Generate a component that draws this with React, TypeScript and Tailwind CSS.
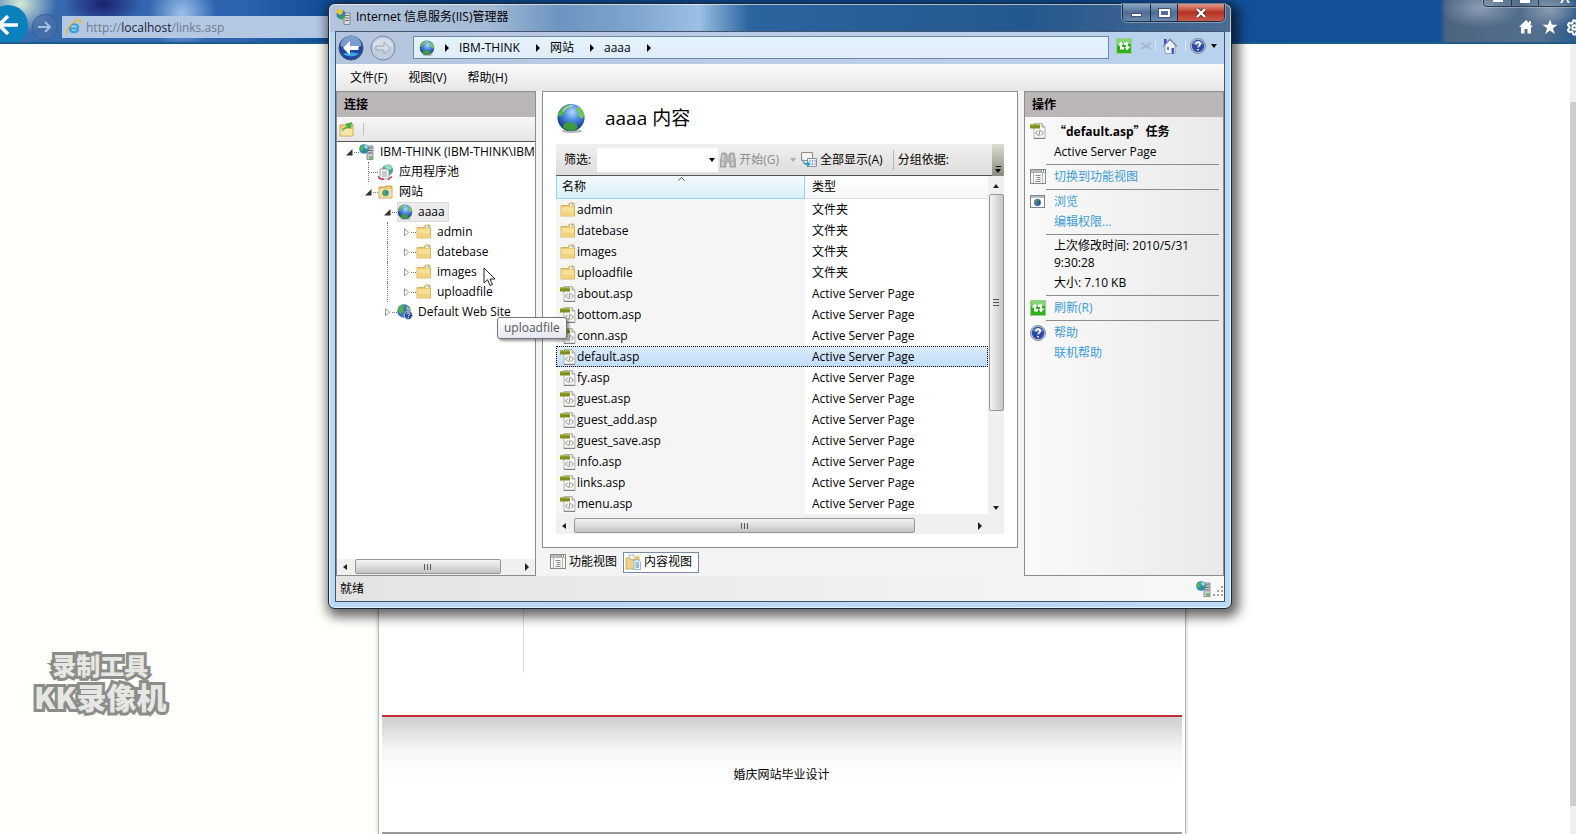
import React from 'react';
import { Settings } from 'lucide-react';

type IconProps = { size?: number };
type IconType = React.FC<IconProps>;

const GlobeIcon: IconType = ({ size = 16 }) => (
  <svg width={size} height={size} viewBox="0 0 32 32" className="shrink-0">
    <defs>
      <radialGradient id="sea" cx="55%" cy="30%" r="70%">
        <stop offset="0" stopColor="#b4d8fc" />
        <stop offset="0.45" stopColor="#4a8ae0" />
        <stop offset="1" stopColor="#142c80" />
      </radialGradient>
    </defs>
    <ellipse cx="17" cy="30" rx="11" ry="2" fill="#b9bcc4" />
    <circle cx="16" cy="15.500" r="14.500" fill="url(#sea)" />
    <path d="M4 9C7 4 11 1.500 15 1.200L14 5l-4 2-1 4-4 3-3 0c0-2 .5-3.500 2-5z" fill="#58b048" />
    <path d="M24 4c3 2 5 5 6 9l-2 4-4-3 0-4-3-3z" fill="#78c858" />
    <path d="M9 22l6-2 7 3 1 4-4 2.500c-5 1-9-1-12-4z" fill="#3c9c3c" />
    <path d="M7 9c3-4 7-6 11-6" stroke="#d8f0d0" strokeWidth="1.500" fill="none" opacity="0.7" />
  </svg>
);

const FolderIcon: IconType = () => (
  <svg width="16" height="16" viewBox="0 0 16 16" className="shrink-0">
    <path d="M1 3.500h7l1.500-2.500H14v2.500h.500V14H1z" fill="#e6c468" stroke="#cfa44c" strokeWidth="0.8" />
    <path d="M10 1.800h3.500V4H10z" fill="#fff" />
    <circle cx="12.500" cy="2.600" r="0.900" fill="#5aa6e8" />
    <path d="M1.500 4.800h12.600v8.700H1.500z" fill="#f8e096" />
    <path d="M1.500 9.500h12.600v4H1.500z" fill="#f2d47e" />
  </svg>
);

const AspIcon: IconType = () => (
  <svg width="16" height="16" viewBox="0 0 16 16" className="shrink-0">
    <path d="M4 .5h8L15 4v11.500H4z" fill="#f7f7f5" stroke="#a4a4a4" strokeWidth="0.8" />
    <path d="M12 .5V4h3" fill="#ddd" stroke="#8f8f8f" strokeWidth="0.8" />
    <path d="M4 15.300h11" stroke="#777" />
    <path d="M0 1.500h10v4H0z" fill="#7f8f1c" />
    <path d="M0 1.500h10v1H0z" fill="#a3b23c" />
    <path d="M8 7.500L5.500 10 8 12.500M11 7.500l2.500 2.500-2.500 2.500M10.200 6.800L8.800 13" stroke="#8a8a8a" strokeWidth="1" fill="none" />
  </svg>
);

const ServerIcon: IconType = () => (
  <svg width="16" height="16" viewBox="0 0 16 16" className="shrink-0">
    <path d="M8 2h6v13.500H8z" fill="#c9cccf" stroke="#777c80" strokeWidth="0.8" />
    <path d="M9 4h4M9 6.500h4M9 9h4" stroke="#5d6266" />
    <path d="M10 12.500h4v2h-4z" fill="#58b84c" />
    <circle cx="5" cy="5" r="4.800" fill="#2e88c8" />
    <path d="M1 4c1-2 3-3.500 5-3L5 4 3 7c-1 0-2-1-2-3z" fill="#58b848" />
    <path d="M5 2l2-1 2 2-1 2-2-1z" fill="#a8dcf4" />
    <path d="M6 6l3-1c0 2-1 3.500-3 4z" fill="#3c9c3c" />
  </svg>
);

const TitleIcon: IconType = () => (
  <svg width="16" height="16" viewBox="0 0 16 16" className="shrink-0">
    <path d="M8 4h6v11.500H8z" fill="#dcdfe0" stroke="#6f7478" strokeWidth="0.8" />
    <path d="M9 6.500h4M9 9h4M9 11.500h4" stroke="#6d7276" />
    <circle cx="5" cy="5.500" r="4.500" fill="#3a78c0" />
    <path d="M0 2c2-2 5-2 7 0l-1 3-3 1z" fill="#f0c820" />
    <path d="M3 8l4-3 2 2-3 4z" fill="#38a048" />
  </svg>
);

const AppPoolIcon: IconType = () => (
  <svg width="16" height="16" viewBox="0 0 16 16" className="shrink-0">
    <circle cx="9.500" cy="6" r="5.500" fill="#3ba890" />
    <path d="M6 2c3-2 7-1 8 2l-2 2-4-1z" fill="#9adcc8" />
    <path d="M2 5h7l2 2v8H2z" fill="#f4f4f4" stroke="#8a8a8a" strokeWidth="0.8" />
    <path d="M4 8h5M4 10h5M4 12h5" stroke="#8a8a8a" strokeWidth="0.8" />
    <path d="M0 12c1 3 4 3.500 6 3.200" stroke="#c8384c" strokeWidth="1.400" fill="none" />
    <path d="M10 15.500l4-3" stroke="#c8384c" strokeWidth="1.400" />
  </svg>
);

const SitesIcon: IconType = () => (
  <svg width="16" height="16" viewBox="0 0 16 16" className="shrink-0">
    <path d="M1 3h6l1-1h6v12H1z" fill="#ecca74" stroke="#b8903c" strokeWidth="0.8" />
    <path d="M1.500 5h12v8.500h-12z" fill="#f7e2a4" />
    <circle cx="7.500" cy="9" r="3.200" fill="#2e8ac0" />
    <path d="M4.800 8c1-2 3-2 4-1.500L7.500 9l1 2.500c-2 1-4-1-3.700-3.500z" fill="#4fb040" />
  </svg>
);

const QuestionGlobeIcon: IconType = () => (
  <svg width="16" height="16" viewBox="0 0 16 16" className="shrink-0">
    <circle cx="7" cy="7" r="6.800" fill="#3c72c8" />
    <path d="M1 5c1-3 4-5 7-4.500L6 4l1 3-3 3C2 9 1 7 1 5z" fill="#52b044" />
    <path d="M10 2l3 3-1 2-3-2z" fill="#8ccc70" />
    <circle cx="11.300" cy="11.300" r="4.200" fill="#2b4b94" stroke="#dfe8f4" strokeWidth="0.800" />
    <path d="M9.800 10.300c0-2 3-2 3-.3 0 1-1.500 1-1.500 2.200M11.300 13v1" stroke="#fff" strokeWidth="1" fill="none" />
  </svg>
);

const RefreshIcon: IconType = () => (
  <svg width="16" height="16" viewBox="0 0 16 16" className="shrink-0">
    <rect x="0.500" y="0.500" width="15" height="15" fill="#2cb01c" stroke="#9ccf94" />
    <path d="M1 1h14v5H1z" fill="#84d474" />
    <path d="M1.500 7.500L5 3.500 7.500 7H6v2h2v2.500H4V7.500z" fill="#fff" />
    <path d="M14.500 8.500L11 12.500 8.500 9H10V7H8V4.500h4v4z" fill="#fff" />
  </svg>
);

const HelpIcon: IconType = () => (
  <svg width="16" height="16" viewBox="0 0 16 16" className="shrink-0">
    <circle cx="8" cy="8" r="7.500" fill="#c8ccd8" stroke="#6a7084" strokeWidth="0.800" />
    <circle cx="8" cy="8" r="6.200" fill="#2c48a8" />
    <path d="M2.500 6c1-4 10-4 11 0-3 1.500-8 1.500-11 0z" fill="#6484cc" />
    <path d="M6 6.300c0-3 4.200-2.800 4.200-.2C10.200 7.800 8 7.800 8 9.500M8 11v1.600" stroke="#fff" strokeWidth="1.600" fill="none" />
  </svg>
);

const FeatureViewIcon: IconType = () => (
  <svg width="16" height="16" viewBox="0 0 16 16" className="shrink-0">
    <rect x="0.500" y="0.500" width="15" height="14" fill="#f8f8f8" stroke="#8a8a8a" />
    <path d="M1 2h10" stroke="#b8b8b8" strokeWidth="2" />
    <path d="M11 2h4" stroke="#888" strokeWidth="2" strokeDasharray="1 1" />
    <path d="M1 3.500h14M3.500 4v10M12.500 4v10" stroke="#b4b4b4" />
    <path d="M5.500 6.500h5M6.500 8.500h4M6.500 10.500h4M5.500 12.500h5" stroke="#888" />
  </svg>
);

const ContentViewIcon: IconType = () => (
  <svg width="16" height="16" viewBox="0 0 16 16" className="shrink-0">
    <path d="M4 1h5v5H4z" fill="#fff" stroke="#a0a0a0" strokeWidth="0.800" />
    <path d="M10 3l3-2 2 3v4h-5z" fill="#e8c474" />
    <path d="M1 4h4l1 2h6v9H1z" fill="#f0d48c" stroke="#c0a058" strokeWidth="0.800" />
    <path d="M9 6h5l1.500 2v7.500H9z" fill="#f4f9ff" stroke="#7aa8d8" strokeWidth="0.800" />
    <path d="M10.500 9h3.500M10.500 11h3.500M10.500 13h3.500" stroke="#3c7cc8" />
  </svg>
);

const BrowseIcon: IconType = () => (
  <svg width="16" height="16" viewBox="0 0 16 16" className="shrink-0">
    <rect x="0.500" y="1.500" width="14" height="12" fill="#fff" stroke="#7c8494" />
    <path d="M1 3h13" stroke="#b4bccc" strokeWidth="2" />
    <circle cx="7.500" cy="8.500" r="3.400" fill="#2c58b0" />
    <path d="M5 7c1-2 3-2 4-1L7 8l1 3c-2 0-3-2-3-4z" fill="#48a048" />
  </svg>
);

const BinocularsIcon: IconType = () => (
  <svg width="16" height="16" viewBox="0 0 16 16" className="shrink-0">
    <path d="M2 1h4l1 3h2l1-3h4l1.500 8v6H10v-5H6v5H.5V9z" fill="#b4b4b4" stroke="#949494" strokeWidth="0.800" />
    <path d="M3 3v5M12 3v5M2.500 10v4M12.500 10v4" stroke="#dcdcdc" strokeWidth="1.200" />
  </svg>
);

const ShowAllIcon: IconType = () => (
  <svg width="16" height="16" viewBox="0 0 16 16" className="shrink-0">
    <path d="M.5.500h11v8H.5z" fill="#f4f4f4" stroke="#8c8c8c" />
    <path d="M6.500 6.500h9v8h-9z" fill="#f0f2fa" stroke="#8890a4" />
    <path d="M8.500 9h1M11 9h1M13.500 9h1M8.500 12h1M11 12h1M13.500 12h1" stroke="#5868c0" strokeWidth="1.500" />
    <path d="M2 6c0 4 1 5 4 5V8.500L9.500 12 6 15.500V13C3 13 1 11 2 6z" fill="#28a0c8" />
  </svg>
);

const HomeIcon: IconType = () => (
  <svg width="16" height="16" viewBox="0 0 16 16" className="shrink-0">
    <path d="M2 1h2.500v5H2z" fill="#3c48b8" />
    <path d="M3 7l5-5 5 5v8.500H3z" fill="#eef1f8" stroke="#8088a0" strokeWidth="0.700" />
    <path d="M1 8.500L8 1.200l7 7.300" stroke="#7c88ac" strokeWidth="1.400" fill="none" />
    <path d="M9.500 10h2.500v5.500H9.500z" fill="#4858b0" />
    <path d="M5 9h2v3H5z" fill="#6c80c8" />
  </svg>
);

const IeIcon: IconType = () => (
  <svg width="16" height="16" viewBox="0 0 16 16" className="shrink-0">
    <path d="M3.500 9.500h9M12.300 10.500c-2 4-8.600 3.500-8.600-1.500S12 4 12.300 9" stroke="#38a0dc" strokeWidth="2.200" fill="none" />
    <path d="M2 14.500C-1 12 5 2 12.500 1 16 .7 15 4 14 5.500" stroke="#f0bc30" strokeWidth="1.500" fill="none" />
  </svg>
);

const Arrow: React.FC<{ dir: 'up' | 'down' | 'left' | 'right'; color?: string }> = ({ dir, color = '#222' }) => {
  const points = { up: '1,6 4,2 7,6', down: '1,2 4,6 7,2', left: '6,1 2,4 6,7', right: '2,0 6,4 2,8' }[dir];
  return (
    <svg width="8" height="8" viewBox="0 0 8 8" className="shrink-0">
      <polygon points={points} fill={color} />
    </svg>
  );
};

type TreeNode = {
  label: string;
  level: number;
  icon: IconType;
  state?: 'open' | 'closed';
  guides?: number[];
  selected?: boolean;
};

const tree: TreeNode[] = [
  { label: 'IBM-THINK (IBM-THINK\\IBM)', level: 0, icon: ServerIcon, state: 'open' },
  { label: '应用程序池', level: 1, icon: AppPoolIcon, guides: [1] },
  { label: '网站', level: 1, icon: SitesIcon, state: 'open' },
  { label: 'aaaa', level: 2, icon: GlobeIcon, state: 'open', selected: true },
  { label: 'admin', level: 3, icon: FolderIcon, state: 'closed', guides: [2] },
  { label: 'datebase', level: 3, icon: FolderIcon, state: 'closed', guides: [2] },
  { label: 'images', level: 3, icon: FolderIcon, state: 'closed', guides: [2] },
  { label: 'uploadfile', level: 3, icon: FolderIcon, state: 'closed', guides: [2] },
  { label: 'Default Web Site', level: 2, icon: QuestionGlobeIcon, state: 'closed' },
];

const folders = ['admin', 'datebase', 'images', 'uploadfile'];
const pages = ['about', 'bottom', 'conn', 'default', 'fy', 'guest', 'guest_add', 'guest_save', 'info', 'links', 'menu'];

const files = [
  ...folders.map((name) => ({ name, type: '文件夹', icon: FolderIcon })),
  ...pages.map((page) => ({ name: `${page}.asp`, type: 'Active Server Page', icon: AspIcon })),
];

const TreeRow: React.FC<{ node: TreeNode }> = ({ node }) => {
  const Icon = node.icon;
  const cells = Array.from({ length: node.level + 1 }, (_, i) => i);
  return (
    <li className="flex h-5 items-center whitespace-nowrap">
      {cells.map((i) => (
        <span key={i} className="flex h-5 w-[19px] shrink-0 items-center">
          {node.guides?.includes(i) ? (
            <span className="ml-[9px] h-5 border-l border-dotted border-[#777]" />
          ) : (
            <span className="w-[5px]" />
          )}
          {i === node.level && node.state && (
            <svg width="9" height="9" viewBox="0 0 9 9" className="shrink-0">
              {node.state === 'open' ? (
                <path d="M7.500 1v6.500H1z" fill="#333" />
              ) : (
                <path d="M2.500.8v7L6.800 4.300z" fill="#fff" stroke="#999" />
              )}
            </svg>
          )}
          {i === node.level && <span className="flex-1 border-t border-dotted border-[#777]" />}
        </span>
      ))}
      <button
        className={`flex h-5 items-center gap-[5px] pr-1 ${node.selected ? 'bg-[#ebebee] outline -outline-offset-1 outline-[#dcdce0]' : ''}`}
      >
        <Icon />
        {node.label}
      </button>
    </li>
  );
};

const HScroll: React.FC<{ thumb: string }> = ({ thumb }) => (
  <div className="flex h-4 items-center justify-between bg-[#f0f0f0] px-1">
    <Arrow dir="left" />
    <div className="flex h-4 min-w-0 flex-1 px-[6px]">
      <div
        className={`flex h-[15px] items-center justify-center gap-[2px] rounded-[2px] border border-[#979797] bg-linear-to-b from-[#f4f4f4] via-[#dcdcdc] to-[#c4c4c4] ${thumb}`}
      >
        <span className="h-[6px] w-px bg-[#555]" />
        <span className="h-[6px] w-px bg-[#555]" />
        <span className="h-[6px] w-px bg-[#555]" />
      </div>
    </div>
    <Arrow dir="right" />
  </div>
);

const BrowserBar: React.FC = () => (
  <header className="relative flex h-11 items-center overflow-hidden border-b-2 border-[#1c5c88] bg-[#11509a] bg-[radial-gradient(ellipse_36px_30px_at_20px_4px,#d8ecd8,transparent),radial-gradient(ellipse_40px_24px_at_103px_4px,#1b2070,transparent),radial-gradient(ellipse_34px_36px_at_182px_14px,#9cc0ec,transparent),radial-gradient(ellipse_40px_20px_at_1480px_8px,#8c9cb4,transparent),radial-gradient(ellipse_30px_18px_at_1550px_10px,#8c9cb0,transparent),linear-gradient(90deg,#3a6cae_0,#2e64b0_240px,#0f4c94_330px,#12509a_1440px,#4c6480_1446px,#54708e_1540px,#2c5a8c)]">
    <button aria-label="Back" className="-ml-3 mt-2 flex size-[40px] shrink-0 items-center justify-center rounded-full bg-[#0a80bc]">
      <svg width="24" height="24" viewBox="0 0 24 24">
        <path d="M22 12H4M12 3l-9 9 9 9" stroke="#fff" strokeWidth="3.500" fill="none" />
      </svg>
    </button>
    <button aria-label="Forward" className="ml-1 mt-3 flex size-[26px] shrink-0 items-center justify-center rounded-full border border-[#3a5c90] bg-[#4a70a8]/60">
      <svg width="16" height="16" viewBox="0 0 16 16">
        <path d="M1 8h12M8 3l5 5-5 5" stroke="#a8c0e0" strokeWidth="2" fill="none" />
      </svg>
    </button>
    <div className="mt-3 ml-1 flex h-[22px] w-[700px] items-center gap-1 bg-[#b4c8e4] pl-1">
      <IeIcon />
      <a href="http://localhost/links.asp" className="pt-px text-[#6c7c90]">
        http://<span className="text-[#182434]">localhost</span>/links.asp
      </a>
    </div>
    <div className="mt-3 ml-auto flex shrink-0 items-center gap-2">
      <button aria-label="Home">
        <svg width="16" height="16" viewBox="0 0 16 16">
          <path d="M8 1l7 7h-2v6.500H9.500V10h-3v4.500H3V8H1z" fill="#fff" />
          <path d="M11 2h2v3h-2z" fill="#fff" />
        </svg>
      </button>
      <button aria-label="Favorites">
        <svg width="16" height="16" viewBox="0 0 16 16">
          <path d="M8 .5l2 5.300h5.500L11 9.200l1.700 5.800L8 11.600 3.300 15 5 9.200.500 5.800H6z" fill="#fff" />
        </svg>
      </button>
      <button aria-label="Tools" className="-mr-[7px]">
        <Settings size={17} color="#fff" strokeWidth={3} />
      </button>
    </div>
    <div className="absolute top-0 -right-4 flex h-[7px] overflow-hidden rounded-b-[4px] border border-t-0 border-[#2c3c50] outline outline-[#b0bcc8]/60">
      <span className="flex w-7 justify-center border-r border-[#2c3c50]"><span className="h-[2px] w-[10px] bg-white" /></span>
      <span className="flex w-[27px] justify-center border-r border-[#2c3c50]"><span className="h-[3px] w-[10px] bg-white" /></span>
      <span className="flex w-[52px] justify-center">
        <svg width="10" height="3" viewBox="0 0 10 3">
          <path d="M3 0L1 3M7 0l2 3" stroke="#fff" strokeWidth="2" />
        </svg>
      </span>
    </div>
  </header>
);

const TitleBar: React.FC = () => (
  <div className="flex h-[27px] items-start justify-between">
    <div className="flex h-[26px] items-center gap-1 pl-px">
      <TitleIcon />
      <h1>Internet 信息服务(IIS)管理器</h1>
    </div>
    <div className="flex h-[18px] overflow-hidden rounded-b-[5px] border border-t-0 border-[#1c2c44] outline outline-[#a8bcd4]/60">
      <button aria-label="Minimize" className="flex w-7 items-center justify-center border-r border-[#1c2c44] bg-linear-to-b from-[#90a8c4] via-[#4e6c94] to-[#6c88ac]">
        <span className="mt-1 h-1 w-[11px] border border-[#44546c] bg-white" />
      </button>
      <button aria-label="Maximize" className="flex w-[27px] items-center justify-center border-r border-[#1c2c44] bg-linear-to-b from-[#90a8c4] via-[#4e6c94] to-[#6c88ac]">
        <span className="h-2 w-[11px] border-2 border-white outline outline-[#44546c]" />
      </button>
      <button aria-label="Close" className="flex w-[46px] items-center justify-center bg-linear-to-b from-[#e0988c] via-[#b83020] to-[#c85c48]">
        <svg width="12" height="10" viewBox="0 0 12 10">
          <path d="M2 1l8 8M10 1L2 9" stroke="#58302c" strokeWidth="4" />
          <path d="M2 1l8 8M10 1L2 9" stroke="#fff" strokeWidth="2.400" />
        </svg>
      </button>
    </div>
  </div>
);

const NavBar: React.FC = () => (
  <div className="flex h-8 items-center bg-linear-to-r from-[#b4c4dc] via-[#bccdea] to-[#b8d2ee] pr-[6px] pl-[2px]">
    <button aria-label="Back" className="shrink-0">
      <svg width="26" height="26" viewBox="0 0 26 26">
        <circle cx="13" cy="13" r="12" fill="#1c48a0" stroke="#3c5478" />
        <path d="M2.500 11a10.500 10.500 0 0 1 21 0c-6 3-15 3-21 0z" fill="#7c9cd0" />
        <path d="M5 19a10 6 0 0 0 16 0c-4-2-12-2-16 0z" fill="#38a4e4" />
        <path d="M12 6v5h8.500v4H12v5l-7-7z" fill="#fff" />
      </svg>
    </button>
    <button aria-label="Forward" className="ml-[6px] shrink-0">
      <svg width="26" height="26" viewBox="0 0 26 26">
        <circle cx="13" cy="13" r="12" fill="#c2cee0" stroke="#77869c" />
        <path d="M3 11a10.500 10.500 0 0 1 20 0c-6 3-14 3-20 0z" fill="#d6dee8" />
        <path d="M20.500 13L14 7v4H6v4h8v4z" fill="#d4dce6" stroke="#9ca8b8" />
      </svg>
    </button>
    <nav className="mb-px ml-[17px] flex h-[23px] flex-1 items-center border border-[#7488a4] bg-linear-to-b from-[#e4f4fc] to-[#e0ecfa] pl-[5px]">
      <GlobeIcon />
      <span className="ml-2"><Arrow dir="right" color="#000" /></span>
      <a href="#server" className="ml-2">IBM-THINK</a>
      <span className="ml-[14px]"><Arrow dir="right" color="#000" /></span>
      <a href="#sites" className="ml-2">网站</a>
      <span className="ml-[14px]"><Arrow dir="right" color="#000" /></span>
      <a href="#aaaa" className="ml-2">aaaa</a>
      <span className="ml-[14px]"><Arrow dir="right" color="#000" /></span>
    </nav>
    <div className="mb-1 ml-[7px] flex items-center">
      <button aria-label="Refresh"><RefreshIcon /></button>
      <button aria-label="Stop" className="ml-2">
        <svg width="12" height="8" viewBox="0 0 12 8">
          <path d="M1 1l10 6M11 1L1 7" stroke="#a8b4c8" strokeWidth="2" />
        </svg>
      </button>
      <span className="ml-[3px] h-3 w-px bg-[#d8e4f2]" />
      <button aria-label="Home" className="ml-[6px]"><HomeIcon /></button>
      <span className="ml-[7px] h-3 w-px bg-[#d8e4f2]" />
      <button aria-label="Help" className="ml-1 flex items-center gap-1"><HelpIcon /><Arrow dir="down" color="#000" /></button>
    </div>
  </div>
);

const ConnectionsPanel: React.FC = () => (
  <section className="flex w-[200px] shrink-0 flex-col border border-[#8c8c8c] bg-white">
    <h2 className="h-[25px] bg-[#bab5b7] pl-[7px] leading-[25px] font-semibold">连接</h2>
    <div className="flex h-[25px] items-center gap-2 border-b border-[#555] bg-linear-to-b from-[#f8f8f8] to-[#e6e4e4] pl-[2px]">
      <button aria-label="Connect">
        <svg width="16" height="16" viewBox="0 0 16 16">
          <path d="M1 4h6l1-1h6v12H1z" fill="#f0d078" stroke="#b8984c" strokeWidth="0.800" />
          <path d="M1.500 8h12v6.500h-12z" fill="#f8e4a4" />
          <path d="M3 11c0-4 3-5 5-5L6 3l7-2-1 7-2-1C7 7 5 8 3 11z" fill="#4cb03c" />
        </svg>
      </button>
      <span className="h-3 w-px bg-[#c0c0c0]" />
    </div>
    <ul className="flex-1 overflow-hidden pl-[3px]">
      {tree.map((node) => (
        <TreeRow key={node.label} node={node} />
      ))}
    </ul>
    <HScroll thumb="w-[90%]" />
  </section>
);

const FilterBar: React.FC = () => (
  <div className="flex h-8 items-center border-b border-[#555] bg-linear-to-b from-[#f0f0ee] to-[#dedcdc] pl-2 whitespace-nowrap">
    <label htmlFor="filter">筛选:</label>
    <div className="ml-[6px] flex h-6 w-[121px] items-center bg-white">
      <input id="filter" type="text" className="h-6 w-full min-w-0 outline-none" />
      <button aria-label="Filter history" className="mr-[2px]"><Arrow dir="down" color="#000" /></button>
    </div>
    <button className="ml-[2px] flex items-center gap-[3px] text-[#8c8c8c]">
      <BinocularsIcon />开始(G)
    </button>
    <span className="ml-[10px]"><Arrow dir="down" color="#aaa" /></span>
    <button className="ml-1 flex items-center gap-[3px]">
      <ShowAllIcon />全部显示(A)
    </button>
    <span className="mr-1 ml-[10px] h-5 w-px bg-[#b4b4b4]" />
    <span>分组依据:</span>
    <button aria-label="More" className="ml-auto flex h-8 w-3 flex-col items-center justify-end bg-linear-to-b from-[#dcdcd4] to-[#8c8c7c] pb-px">
      <span className="h-px w-[5px] bg-black" />
      <Arrow dir="down" color="#000" />
    </button>
  </div>
);

const FileTable: React.FC = () => (
  <div className="flex bg-white">
    <table className="flex-1 table-fixed border-separate border-spacing-0 text-left">
      <thead>
        <tr className="h-[23px] bg-linear-to-b from-white to-[#f4f5f6]">
          <th className="relative w-[249px] border border-t-0 border-[#90d8f0] bg-linear-to-b from-[#f2fafd] to-[#daf0f9] p-0 pl-[5px] font-normal">
            名称
            <svg width="7" height="4" viewBox="0 0 7 4" className="absolute top-px left-[121px]">
              <path d="M.5 3.500l3-3 3 3" stroke="#555" fill="none" />
            </svg>
          </th>
          <th className="border-b border-[#e0e0e0] p-0 pl-[7px] font-normal">类型</th>
        </tr>
      </thead>
      <tbody>
        {files.map(({ name, type, icon: Icon }) => (
          <tr
            key={name}
            className={
              name === 'default.asp'
                ? 'h-[21px] bg-linear-to-b from-[#dcecfb] to-[#bfdcf6] outline-1 -outline-offset-1 outline-dotted outline-black'
                : 'h-[21px]'
            }
          >
            <td className={name === 'default.asp' ? 'p-0 pl-1' : 'bg-[#f5f5f6] p-0 pl-1'}>
              <span className="flex items-center gap-px">
                <Icon />
                {name}
              </span>
            </td>
            <td className="p-0 pl-[7px]">{type}</td>
          </tr>
        ))}
      </tbody>
    </table>
    <div className="flex w-4 flex-col items-center bg-[#f0f0f0] pt-[6px] pb-[2px]">
      <Arrow dir="up" />
      <div className="mt-1 flex min-h-0 w-[15px] flex-1 flex-col">
        <div className="flex h-[70%] flex-col items-center justify-center gap-[2px] rounded-[2px] border border-[#979797] bg-linear-to-r from-[#f4f4f4] via-[#dcdcdc] to-[#c4c4c4]">
          <span className="h-px w-[6px] bg-[#555]" />
          <span className="h-px w-[6px] bg-[#555]" />
          <span className="h-px w-[6px] bg-[#555]" />
        </div>
      </div>
      <Arrow dir="down" />
    </div>
  </div>
);

const ContentPanel: React.FC = () => (
  <section className="flex min-w-0 flex-1 flex-col">
    <div className="border border-[#8c8c8c] bg-white px-[13px] pb-[13px]">
      <div className="flex h-[52px] items-center gap-[19px]">
        <GlobeIcon size={30} />
        <h2 className="text-[19px] leading-6">aaaa 内容</h2>
      </div>
      <FilterBar />
      <FileTable />
      <div className="bg-[#f0f0f0] pt-1 pr-4">
        <HScroll thumb="w-[86%]" />
      </div>
    </div>
    <div className="flex h-[28px] items-center gap-[6px] pl-2">
      <button className="flex items-center gap-[3px]">
        <FeatureViewIcon />功能视图
      </button>
      <button className="flex h-[21px] items-center gap-[3px] border border-[#7a8aa4] bg-white pr-[6px] pl-px">
        <ContentViewIcon />内容视图
      </button>
    </div>
  </section>
);

const ActionGroup: React.FC<{ icon?: React.ReactNode; last?: boolean; children: React.ReactNode }> = ({ icon, last, children }) => (
  <div className="flex">
    <div className="w-4 shrink-0 pt-1">{icon}</div>
    <div className={`flex flex-1 flex-col items-start py-[2px] pl-2 leading-5 ${last ? '' : 'border-b border-[#8c8c8c]'}`}>
      {children}
    </div>
  </div>
);

const ActionLink: React.FC<{ children: React.ReactNode }> = ({ children }) => (
  <a href="#action" className="text-[#3c9cd8]">{children}</a>
);

const ActionsPanel: React.FC = () => (
  <section className="w-[200px] shrink-0 border border-[#8c8c8c] bg-linear-to-r from-[#fafafa] to-[#e9e9ea]">
    <h2 className="h-[25px] bg-[#bab5b7] pl-[7px] leading-[25px] font-semibold">操作</h2>
    <div className="pt-[2px] pr-1 pl-[5px]">
      <ActionGroup icon={<AspIcon />}>
        <h3 className="font-bold">
          <span className="font-['Noto_Sans_CJK_SC']">“</span>default.asp<span className="font-['Noto_Sans_CJK_SC']">”</span>任务
        </h3>
        <p>Active Server Page</p>
      </ActionGroup>
      <ActionGroup icon={<FeatureViewIcon />}>
        <ActionLink>切换到功能视图</ActionLink>
      </ActionGroup>
      <ActionGroup icon={<BrowseIcon />}>
        <ActionLink>浏览</ActionLink>
        <ActionLink>编辑权限...</ActionLink>
      </ActionGroup>
      <ActionGroup>
        <p className="pb-[2px] leading-[17px]">上次修改时间: 2010/5/31 9:30:28</p>
        <p>大小: 7.10 KB</p>
      </ActionGroup>
      <ActionGroup icon={<RefreshIcon />}>
        <ActionLink>刷新(R)</ActionLink>
      </ActionGroup>
      <ActionGroup icon={<HelpIcon />} last>
        <ActionLink>帮助</ActionLink>
        <ActionLink>联机帮助</ActionLink>
      </ActionGroup>
    </div>
  </section>
);

const IisWindow: React.FC = () => (
  <div className="absolute top-[3px] left-[328px] w-[904px] rounded-[7px] border border-[#1c2836] bg-[#bcd9f4] bg-[linear-gradient(90deg,#b4c6dc_0,#a4bad6_160px,#6c94c0_230px,#7ca4cc_300px,#9cc0e4_370px,#2c64a0_420px,#24588f_700px,#4c6c90_100%)] bg-[length:100%_28px] bg-no-repeat px-[6px] pb-[6px] shadow-[3px_4px_12px_4px_rgba(0,0,0,0.6),inset_0_0_0_1px_rgba(255,255,255,0.6)]">
    <TitleBar />
    <div className="border border-[#44546c] bg-[#f4f4f4]">
      <NavBar />
      <div className="flex h-[27px] items-center gap-[21px] bg-linear-to-b from-[#fafafa] to-[#e6e6e6] pl-[14px]">
        <button>文件(F)</button>
        <button>视图(V)</button>
        <button>帮助(H)</button>
      </div>
      <div className="flex gap-[6px]">
        <ConnectionsPanel />
        <ContentPanel />
        <ActionsPanel />
      </div>
      <footer className="flex h-[25px] items-center justify-between bg-linear-to-r from-[#e4e3e2] to-[#f8f8f8] pt-px pl-1">
        <span>就绪</span>
        <span className="flex items-center">
          <ServerIcon />
          <svg width="12" height="12" viewBox="0 0 12 12" className="mt-1">
            <path d="M9 1h2v2H9zM5 5h2v2H5zM9 5h2v2H9zM1 9h2v2H1zM5 9h2v2H5zM9 9h2v2H9z" fill="#a4a4a4" />
          </svg>
        </span>
      </footer>
    </div>
    <div role="tooltip" className="absolute top-[313px] left-[168px] rounded-[3px] border border-[#767676] bg-linear-to-b from-white to-[#e6e7f0] px-[6px] leading-5 text-[#575757] shadow-[2px_2px_3px_rgba(0,0,0,0.4)]">
      uploadfile
    </div>
    <svg width="13" height="20" viewBox="0 0 13 20" className="absolute top-[263px] left-[154px]">
      <path d="M1 1v15l3.500-3.300L7 18.500l2.500-1L7 12h5z" fill="#fff" stroke="#222" />
    </svg>
  </div>
);

const Watermark: React.FC = () => (
  <div className="absolute bottom-[122px] left-[34px] text-center font-['Noto_Sans_CJK_SC'] font-black text-[#e6e7e4] [-webkit-text-stroke:6px_#8a8d88] [paint-order:stroke_fill]">
    <p className="text-2xl leading-[30px]">录制工具</p>
    <p className="text-[30px] leading-[32px]">KK录像机</p>
  </div>
);

export default function App() {
  return (
    <div className="relative flex h-screen flex-col overflow-hidden bg-white font-['Open_Sans','Noto_Sans_CJK_SC',sans-serif] text-xs text-black">
      <BrowserBar />
      <div className="flex min-h-0 flex-1">
        <main className="flex min-w-0 flex-1 justify-center bg-linear-to-r from-[#fffffb] to-white pr-[7px]">
          <div className="flex w-[808px] flex-col border-x border-[#b8b8b8] bg-white px-[3px] shadow-[0_0_4px_rgba(0,0,0,0.25)]">
            <div className="flex flex-1 pb-[42px]">
              <div className="w-[142px] border-r border-[#dcdcdc]" />
            </div>
            <footer className="h-[119px] border-t-2 border-b-2 border-t-[#c03038] border-b-[#999] bg-linear-to-b from-[#cfcfd1] via-[#f8f8f8] via-30% to-white to-55% pt-12 text-center leading-5">
              婚庆网站毕业设计
            </footer>
          </div>
        </main>
        <div className="flex w-[6px] flex-col bg-[#f0f0f0] py-[58px] pb-7">
          <div className="flex-1 bg-[#cdcdcd]" />
        </div>
      </div>
      <IisWindow />
      <Watermark />
    </div>
  );
}
